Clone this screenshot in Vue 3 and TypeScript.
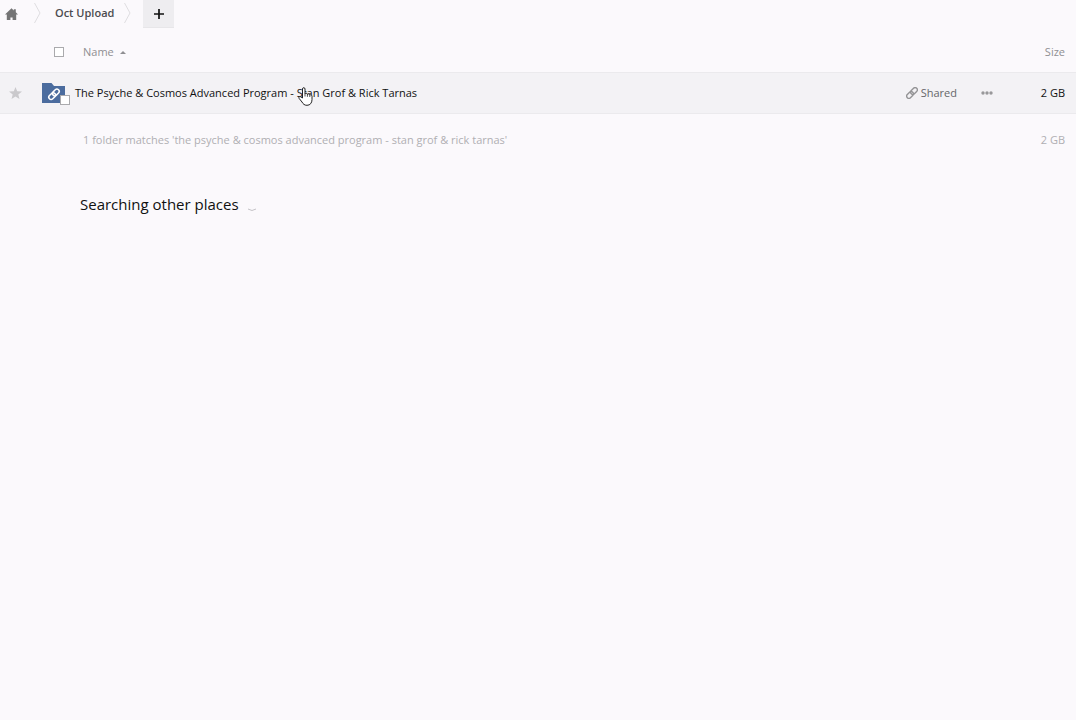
<script setup lang="ts">
import { ref } from 'vue'

interface FolderEntry {
  id: number
  name: string
  size: string
  share: string
}

const folders: FolderEntry[] = [
  { id: 1, name: 'The Psyche & Cosmos Advanced Program - Stan Grof & Rick Tarnas', size: '2 GB', share: 'Shared' },
]
const allSelected = ref(false)
const selected = ref<number[]>([])
</script>

<template>
  <main class="files">
    <nav class="crumbs" aria-label="Breadcrumb">
      <a class="home" href="#" aria-label="Home">
        <svg width="13" height="12" viewBox="0 0 13 12" aria-hidden="true">
          <path d="M6.5 .2 8.8 2.4V1.2h2v3.1L13 6.6h-1.8V12H7.6V9.4H5.4V12H1.8V6.6H0Z" fill="#747475" />
        </svg>
      </a>
      <svg class="divider" width="7" height="22" viewBox="0 0 7 22" aria-hidden="true">
        <path d="M.5 1 6 11 .5 21" fill="none" stroke="#dedde0" />
      </svg>
      <a class="folder-link" href="#">Oct Upload</a>
      <svg class="divider" width="7" height="22" viewBox="0 0 7 22" aria-hidden="true">
        <path d="M.5 1 6 11 .5 21" fill="none" stroke="#dedde0" />
      </svg>
      <button class="add" type="button" aria-label="New">
        <svg width="10" height="10" viewBox="0 0 10 10" aria-hidden="true">
          <path d="M5 0V10M0 5H10" stroke="#111" stroke-width="1.7" />
        </svg>
      </button>
    </nav>

    <table class="list">
      <thead>
        <tr>
          <th class="fav"></th>
          <th class="pick"><input v-model="allSelected" class="check" type="checkbox" aria-label="Select all" /></th>
          <th class="name">
            <button class="sort" type="button">
              Name
              <svg width="6" height="3" viewBox="0 0 6 3" aria-hidden="true"><path d="M0 3 3 0 6 3Z" fill="#8f8f92" /></svg>
            </button>
          </th>
          <th class="size"><button class="sort" type="button">Size</button></th>
        </tr>
      </thead>
      <tbody>
        <tr v-for="folder in folders" :key="folder.id" class="entry">
          <td class="fav">
            <button class="icon-button" type="button" aria-label="Add to favourites">
              <svg width="13" height="12" viewBox="0 0 13 12" aria-hidden="true">
                <path d="M6.5 0 8.2 4.2 13 4.6 9.3 7.5 10.5 12 6.5 9.5 2.5 12 3.7 7.5 0 4.6 4.8 4.2Z" fill="#cac9cc" />
              </svg>
            </button>
          </td>
          <td class="pick">
            <div class="thumb">
              <svg width="24" height="20" viewBox="0 0 24 20" aria-hidden="true">
                <path d="M0 0H9.5L12 3H23V20H0Z" fill="#4b6c9e" />
                <g transform="translate(12 11.3) rotate(-45)" fill="none" stroke="#fff" stroke-width="1.5">
                  <rect x="-6.4" y="-2.3" width="7.6" height="4.6" rx="2.3" />
                  <rect x="-1.2" y="-2.3" width="7.6" height="4.6" rx="2.3" />
                </g>
              </svg>
              <input v-model="selected" class="check badge" type="checkbox" :value="folder.id" :aria-label="folder.name" />
            </div>
          </td>
          <td class="name">
            <div class="name-row">
              <a class="title" href="#">{{ folder.name }}</a>
              <svg class="cursor" width="15" height="19" viewBox="0 0 15 19" aria-hidden="true">
                <path
                  d="M4.5 11V2C4.5.2 7 .2 7 2V7C7.3 5.8 9.3 6 9.4 7.4 10 6.5 11.7 6.8 11.8 8.1 12.6 7.4 14 7.9 14 9.3V12.6C14 15.8 12.2 18.3 9 18.3 6.4 18.3 5.1 17 4 15L1.1 11.4C.2 10 1.9 8.9 3 10Z"
                  fill="#fff" stroke="#222" stroke-width="1" stroke-linejoin="round"
                />
                <path d="M7 7V9.5M9.4 7.4V9.8M11.8 8.1V10" stroke="#222" stroke-width=".8" />
              </svg>
              <button class="share" type="button">
                <svg width="12" height="12" viewBox="0 0 12 12" aria-hidden="true">
                  <g transform="translate(6 6) rotate(-45)" fill="none" stroke="#949496" stroke-width="1.4">
                    <rect x="-6.6" y="-2.2" width="7.6" height="4.4" rx="2.2" />
                    <rect x="-1" y="-2.2" width="7.6" height="4.4" rx="2.2" />
                  </g>
                </svg>
                {{ folder.share }}
              </button>
              <button class="icon-button more" type="button" aria-label="More actions">
                <svg width="12" height="4" viewBox="0 0 12 4" aria-hidden="true">
                  <g fill="#98989a"><circle cx="2" cy="2" r="1.7" /><circle cx="6" cy="2" r="1.7" /><circle cx="10" cy="2" r="1.7" /></g>
                </svg>
              </button>
            </div>
          </td>
          <td class="size">{{ folder.size }}</td>
        </tr>
      </tbody>
      <tfoot>
        <tr>
          <td class="fav"></td>
          <td class="pick"></td>
          <td class="name">1 folder matches 'the psyche &amp; cosmos advanced program - stan grof &amp; rick tarnas'</td>
          <td class="size">2 GB</td>
        </tr>
      </tfoot>
    </table>

    <p class="status" role="status">
      Searching other places
      <svg width="10" height="16" viewBox="0 0 10 16" aria-hidden="true">
        <path d="M1 13Q5 16 9 13" fill="none" stroke="#c4c3c7" />
      </svg>
    </p>
  </main>
</template>

<style>
body {
  margin: 0;
  background: #fbf9fc;
}
</style>

<style scoped>
.files {
  font: 11px/20px "Open Sans", "Noto Sans", sans-serif;
  color: #111;
}
.crumbs {
  display: flex;
  height: 32px;
}
.home {
  display: flex;
  padding: 8px 16px 0 5px;
}
.divider {
  margin-top: 2px;
}
.folder-link {
  padding: 3px 10px 0 14px;
  color: #4c4c4f;
  font-weight: 600;
  text-decoration: none;
}
button {
  padding: 0;
  border: 0;
  background: none;
  color: inherit;
  font: inherit;
}
.add {
  display: flex;
  align-items: center;
  justify-content: center;
  width: 31px;
  height: 28px;
  margin-left: 12px;
  border-bottom: 1px solid #e7e6e9;
  background: #eeedf0;
}
.list {
  width: 100%;
  border-collapse: collapse;
  table-layout: fixed;
}
th,
td {
  padding: 0;
  font-weight: 400;
  text-align: left;
}
thead th {
  height: 40px;
  color: #8f8f92;
}
.fav {
  width: 42px;
}
.pick {
  width: 33px;
}
.size {
  width: 70px;
  padding-right: 11px;
  text-align: right;
}
.sort {
  display: inline-flex;
  align-items: center;
  gap: 6px;
}
thead .name,
tfoot .name {
  padding-left: 8px;
}
.check {
  display: block;
  box-sizing: border-box;
  width: 10px;
  height: 10px;
  margin: 0 0 0 12px;
  border: 1px solid #aaaaad;
  background: #fff;
  appearance: none;
}
.entry td {
  height: 40px;
  border-top: 1px solid #ebeaed;
  border-bottom: 1px solid #ebeaed;
  background: #f3f2f5;
}
.icon-button {
  display: flex;
}
.fav .icon-button {
  margin-left: 9px;
}
.thumb {
  position: relative;
  width: 24px;
  height: 20px;
}
.badge {
  position: absolute;
  top: 12px;
  left: 18px;
  margin: 0;
}
.name-row {
  position: relative;
  display: flex;
  align-items: center;
}
.title {
  flex: 1;
  color: #111;
  text-decoration: none;
}
.cursor {
  position: absolute;
  top: 4px;
  left: 223px;
}
.share {
  display: flex;
  align-items: center;
  gap: 3px;
  color: #666669;
}
.more {
  margin: 0 2px 0 24px;
}
tfoot td {
  height: 52px;
  color: #b0afb3;
}
.status {
  display: flex;
  align-items: center;
  gap: 8px;
  margin: 26px 0 0 80px;
  font-size: 15px;
  line-height: 24px;
}
</style>
